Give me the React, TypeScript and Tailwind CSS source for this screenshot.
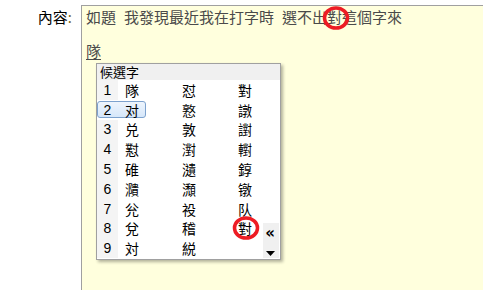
import React from "react";

const rows: [string, string, string, string][] = [
  ["1", "隊", "怼", "對"],
  ["2", "对", "憝", "譈"],
  ["3", "兑", "敦", "譵"],
  ["4", "懟", "濧", "轛"],
  ["5", "碓", "瀢", "錞"],
  ["6", "濻", "瀩", "镦"],
  ["7", "兊", "祋", "队"],
  ["8", "兌", "稽", "對"],
  ["9", "対", "綐", ""],
];

const cjk = { fontFamily: '"Noto Sans CJK TC", "Noto Sans", sans-serif' };

function RedRing({ cx, cy }: { cx: number; cy: number }) {
  return (
    <svg
      className="absolute pointer-events-none"
      style={{ left: cx - 15, top: cy - 14 }}
      width={30}
      height={28}
      viewBox="0 0 30 28"
    >
      <ellipse cx={15} cy={14} rx={11.5} ry={10} fill="none" stroke="#ed1c24" strokeWidth={3.5} />
    </svg>
  );
}

export default function App() {
  return (
    <div className="relative w-[483px] h-[290px] bg-white overflow-hidden" style={cjk}>
      <div className="flex h-full pt-[5px]">
        <div className="w-[81px] shrink-0 pr-[9px] pt-[3px] text-right text-[15px] leading-[17px] text-black">
          內容<span className="text-[#7a6a2a]">:</span>
        </div>
        <div className="relative flex-1 border-l border-t border-[#a0a0a0] bg-[#ffffdd] pl-[4px] pt-[2px] text-[15px] leading-[17px] text-[#4a4a4a]">
          <div className="whitespace-pre">
            如題<span className="inline-block w-[8px]" />我發現最近我在打字時<span className="inline-block w-[8px]" />選不出對這個字來
          </div>
          <div className="h-[17px]" />
          <div>
            <span className="underline underline-offset-[2px] decoration-[#4a4a4a]">隊</span>
          </div>

          <div className="absolute left-[14px] top-[57px] w-[185px] h-[197px] border border-[#a0a0a0] bg-white shadow-[2px_2px_3px_rgba(0,0,0,0.3)] text-black">
            <div className="h-[16px] bg-[#f0f0f0] pl-[3px] text-[13px] leading-[16px]">候選字</div>
            <div className="flex">
              <div className="flex flex-col">
                {rows.map((r) => (
                  <div key={r[0]} className="relative flex h-[19.8px] items-center text-[14px] leading-[18px]">
                    {r[0] === "2" && (
                      <div className="absolute left-[0px] top-[1px] w-[49px] h-[17px] rounded-[3px] border border-[#7da2ce] bg-gradient-to-b from-[#eef5fd] to-[#d6e7fa]" />
                    )}
                    <div
                      className="relative w-[21px] h-full flex items-center justify-center text-[14px]"
                      style={{
                        fontFamily: '"Liberation Sans", Arial, sans-serif',
                        background: r[0] === "2" ? "transparent" : "#f4f4f4",
                      }}
                    >
                      {r[0]}
                    </div>
                    <div className="relative w-[64px] pl-[7px]">{r[1]}</div>
                    <div className="relative w-[56px]">{r[2]}</div>
                    <div className="relative w-[25px]">{r[3]}</div>
                  </div>
                ))}
              </div>
              <div className="flex flex-col w-[16px]">
                <div className="h-[143px]" />
                <div className="flex-1 bg-[#f0f0f0] flex flex-col items-center pt-[2px] pr-[2px]">
                  <span className="text-[15px] leading-[16px] font-bold" style={{ fontFamily: '"DejaVu Sans", sans-serif' }}>«</span>
                  <svg width="9" height="6" viewBox="0 0 9 6" className="mt-[10px]">
                    <polygon points="0,0 9,0 4.5,5" fill="#000" />
                  </svg>
                </div>
              </div>
            </div>
          </div>
        </div>
      </div>
      <RedRing cx={336} cy={18} />
      <RedRing cx={246} cy={228} />
    </div>
  );
}
